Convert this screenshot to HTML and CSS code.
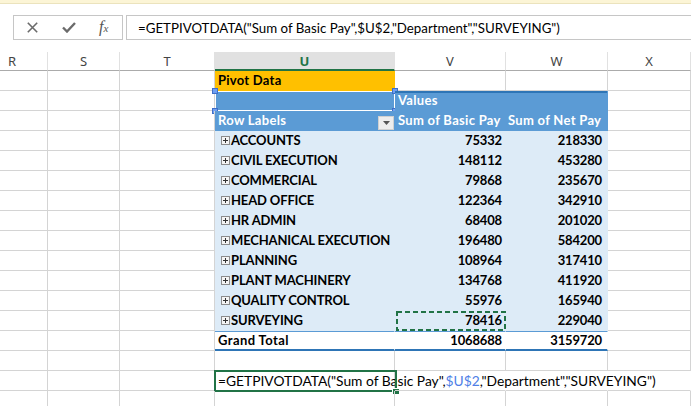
FILE: index.html
```html
<!DOCTYPE html>
<html>
<head>
<meta charset="utf-8">
<title>Pivot Data</title>
<link rel="stylesheet" href="styles.css">
</head>
<body>
<div class="topstrip"></div>
<div class="fbar">
  <div class="fctl">
    <svg class="ic-x" width="11" height="11" viewBox="0 0 11 11"><path d="M0.8 0.8L10.2 10.2M10.2 0.8L0.8 10.2" stroke="#6b6b6b" stroke-width="1.6" fill="none"/></svg>
    <svg class="ic-ok" width="14" height="11" viewBox="0 0 14 11"><path d="M1 5.5L5 9.5L13 1" stroke="#6b6b6b" stroke-width="2.4" fill="none"/></svg>
    <span class="fx">f<span class="fxs">x</span></span>
  </div>
  <div class="finput">=GETPIVOTDATA("Sum of Basic Pay",$U$2,"Department","SURVEYING")</div>
</div>

<div class="sheet">
  <div class="row hdr">
    <div class="h">R</div><div class="h">S</div><div class="h">T</div><div class="h sel">U</div><div class="h">V</div><div class="h">W</div><div class="h">X</div>
  </div>

  <div class="row">
    <div class="c"></div><div class="c"></div><div class="c"></div>
    <div class="c orange">Pivot Data</div>
    <div class="c"></div><div class="c"></div><div class="c"></div>
  </div>

  <div class="row">
    <div class="c"></div><div class="c"></div><div class="c"></div>
    <div class="c ph">
      <div class="selbox">
        <span class="hd tl"></span><span class="hd tr"></span><span class="hd bl"></span><span class="hd br"></span>
      </div>
    </div>
    <div class="c ph vals">Values</div>
    <div class="c"></div>
  </div>

  <div class="row">
    <div class="c"></div><div class="c"></div><div class="c"></div>
    <div class="c ph">Row Labels
      <span class="filt"><svg width="7" height="4" viewBox="0 0 7 4"><path d="M0 0H7L3.5 4Z" fill="#555"/></svg></span>
    </div>
    <div class="c ph">Sum of Basic Pay</div>
    <div class="c ph w">Sum of Net Pay</div>
    <div class="c"></div>
  </div>

  <div class="row">
    <div class="c"></div><div class="c"></div><div class="c"></div>
    <div class="c pv lbl"><svg class="pl" width="9" height="9" viewBox="0 0 9 9"><rect x="0.5" y="0.5" width="8" height="8" fill="#f4f4f4" stroke="#8c8c8c"/><path d="M2 4.5H7M4.5 2V7" stroke="#333"/></svg>ACCOUNTS</div>
    <div class="c pv num">75332</div><div class="c pv num w">218330</div>
    <div class="c"></div>
  </div>
  <div class="row">
    <div class="c"></div><div class="c"></div><div class="c"></div>
    <div class="c pv lbl"><svg class="pl" width="9" height="9" viewBox="0 0 9 9"><rect x="0.5" y="0.5" width="8" height="8" fill="#f4f4f4" stroke="#8c8c8c"/><path d="M2 4.5H7M4.5 2V7" stroke="#333"/></svg>CIVIL EXECUTION</div>
    <div class="c pv num">148112</div><div class="c pv num w">453280</div>
    <div class="c"></div>
  </div>
  <div class="row">
    <div class="c"></div><div class="c"></div><div class="c"></div>
    <div class="c pv lbl"><svg class="pl" width="9" height="9" viewBox="0 0 9 9"><rect x="0.5" y="0.5" width="8" height="8" fill="#f4f4f4" stroke="#8c8c8c"/><path d="M2 4.5H7M4.5 2V7" stroke="#333"/></svg>COMMERCIAL</div>
    <div class="c pv num">79868</div><div class="c pv num w">235670</div>
    <div class="c"></div>
  </div>
  <div class="row">
    <div class="c"></div><div class="c"></div><div class="c"></div>
    <div class="c pv lbl"><svg class="pl" width="9" height="9" viewBox="0 0 9 9"><rect x="0.5" y="0.5" width="8" height="8" fill="#f4f4f4" stroke="#8c8c8c"/><path d="M2 4.5H7M4.5 2V7" stroke="#333"/></svg>HEAD OFFICE</div>
    <div class="c pv num">122364</div><div class="c pv num w">342910</div>
    <div class="c"></div>
  </div>
  <div class="row">
    <div class="c"></div><div class="c"></div><div class="c"></div>
    <div class="c pv lbl"><svg class="pl" width="9" height="9" viewBox="0 0 9 9"><rect x="0.5" y="0.5" width="8" height="8" fill="#f4f4f4" stroke="#8c8c8c"/><path d="M2 4.5H7M4.5 2V7" stroke="#333"/></svg>HR ADMIN</div>
    <div class="c pv num">68408</div><div class="c pv num w">201020</div>
    <div class="c"></div>
  </div>
  <div class="row">
    <div class="c"></div><div class="c"></div><div class="c"></div>
    <div class="c pv lbl"><svg class="pl" width="9" height="9" viewBox="0 0 9 9"><rect x="0.5" y="0.5" width="8" height="8" fill="#f4f4f4" stroke="#8c8c8c"/><path d="M2 4.5H7M4.5 2V7" stroke="#333"/></svg>MECHANICAL EXECUTION</div>
    <div class="c pv num">196480</div><div class="c pv num w">584200</div>
    <div class="c"></div>
  </div>
  <div class="row">
    <div class="c"></div><div class="c"></div><div class="c"></div>
    <div class="c pv lbl"><svg class="pl" width="9" height="9" viewBox="0 0 9 9"><rect x="0.5" y="0.5" width="8" height="8" fill="#f4f4f4" stroke="#8c8c8c"/><path d="M2 4.5H7M4.5 2V7" stroke="#333"/></svg>PLANNING</div>
    <div class="c pv num">108964</div><div class="c pv num w">317410</div>
    <div class="c"></div>
  </div>
  <div class="row">
    <div class="c"></div><div class="c"></div><div class="c"></div>
    <div class="c pv lbl"><svg class="pl" width="9" height="9" viewBox="0 0 9 9"><rect x="0.5" y="0.5" width="8" height="8" fill="#f4f4f4" stroke="#8c8c8c"/><path d="M2 4.5H7M4.5 2V7" stroke="#333"/></svg>PLANT MACHINERY</div>
    <div class="c pv num">134768</div><div class="c pv num w">411920</div>
    <div class="c"></div>
  </div>
  <div class="row">
    <div class="c"></div><div class="c"></div><div class="c"></div>
    <div class="c pv lbl"><svg class="pl" width="9" height="9" viewBox="0 0 9 9"><rect x="0.5" y="0.5" width="8" height="8" fill="#f4f4f4" stroke="#8c8c8c"/><path d="M2 4.5H7M4.5 2V7" stroke="#333"/></svg>QUALITY CONTROL</div>
    <div class="c pv num">55976</div><div class="c pv num w">165940</div>
    <div class="c"></div>
  </div>
  <div class="row">
    <div class="c"></div><div class="c"></div><div class="c"></div>
    <div class="c pv lbl"><svg class="pl" width="9" height="9" viewBox="0 0 9 9"><rect x="0.5" y="0.5" width="8" height="8" fill="#f4f4f4" stroke="#8c8c8c"/><path d="M2 4.5H7M4.5 2V7" stroke="#333"/></svg>SURVEYING</div>
    <div class="c pv num">78416<svg class="marq" width="110" height="20" viewBox="0 0 110 20"><rect x="1" y="1" width="108" height="18" fill="none" stroke="#217346" stroke-width="2" stroke-dasharray="5 3"/></svg></div>
    <div class="c pv num w">229040</div>
    <div class="c"></div>
  </div>

  <div class="row">
    <div class="c"></div><div class="c"></div><div class="c"></div>
    <div class="c gt gtl">Grand Total</div>
    <div class="c gt num">1068688</div><div class="c gt num w">3159720</div>
    <div class="c"></div>
  </div>

  <div class="row">
    <div class="c"></div><div class="c"></div><div class="c"></div><div class="c"></div><div class="c"></div><div class="c"></div><div class="c"></div>
  </div>

  <div class="row">
    <div class="c"></div><div class="c"></div><div class="c"></div>
    <div class="c active">=GETPIVOTDATA("Sum of Basic Pay",<span class="ref">$U$2</span>,"Department","SURVEYING")</div>
    <div class="c ov"></div><div class="c ov"></div><div class="c ov"></div>
  </div>

  <div class="row">
    <div class="c"></div><div class="c"></div><div class="c"></div><div class="c"></div><div class="c"></div><div class="c"></div><div class="c"></div>
  </div>
</div>
</body>
</html>
```

FILE: styles.css
```css
html, body {
  margin: 0;
  padding: 0;
  background: #fff;
}
body {
  width: 691px;
  height: 406px;
  overflow: hidden;
  font-family: Lato, "Liberation Sans", sans-serif;
  color: #000;
}

.topstrip {
  height: 3px;
  background: #fcf5d6;
  border-bottom: 1px solid #ebe3bd;
}

.fbar {
  display: flex;
  gap: 3px;
  padding: 11px 0 0 13px;
  height: 25px;
  margin-bottom: 11px;
}
.fctl {
  box-sizing: border-box;
  width: 110px;
  height: 25px;
  border: 1px solid #c6c6c6;
  display: flex;
  align-items: center;
  gap: 24px;
  padding-left: 13px;
}
.fx {
  font-family: "Liberation Serif", serif;
  font-style: italic;
  font-size: 16px;
  color: #555;
  margin-left: -1px;
  line-height: 16px;
}
.fxs {
  font-size: 11px;
}
.finput {
  box-sizing: border-box;
  flex: 1;
  height: 25px;
  border: 1px solid #c6c6c6;
  border-right: none;
  padding-left: 11px;
  display: flex;
  align-items: center;
  font-size: 13.3px;
  white-space: nowrap;
  color: #000;
}

.sheet {
  padding-top: 1px;
}

.row {
  display: grid;
  grid-template-columns: 48px 72px 95px 180px 111px 102px 83px;
  height: 20px;
}

.hdr {
  height: 19px;
}
.h {
  box-sizing: border-box;
  height: 19px;
  border-right: 1px solid #e1e1e1;
  border-bottom: 1px solid #ababab;
  display: flex;
  align-items: center;
  justify-content: center;
  font-family: "Noto Sans", "Open Sans", sans-serif;
  font-size: 13px;
  color: #444;
}
.h:first-child {
  justify-content: flex-start;
  padding-left: 8px;
}
.h.sel {
  background: #e1e1e1;
  border-bottom: 2px solid #217346;
  color: #217346;
  font-weight: 700;
}

.c {
  box-sizing: border-box;
  position: relative;
  height: 20px;
  border-right: 1px solid #d4d4d4;
  border-bottom: 1px solid #d4d4d4;
  display: flex;
  align-items: flex-end;
  padding: 0 3px 1px 3px;
  font-size: 13.8px;
  line-height: 17px;
  white-space: nowrap;
}

.orange,
.ph,
.pv,
.gt {
  font-size: 13px;
  letter-spacing: -0.15px;
}

.orange {
  background: #ffc000;
  border-color: #ffc000;
  font-weight: 700;
  letter-spacing: 0.25px;
}

.ph {
  background: #5b9bd5;
  border-color: #5b9bd5;
  color: #fff;
  font-weight: 700;
  letter-spacing: 0.3px;
}
.vals {
  grid-column: span 2;
  box-shadow: inset 0 2px 0 #2e75b6;
}
.ph.w {
  padding-left: 2px;
}

.selbox {
  position: absolute;
  left: 0;
  top: 0;
  width: 180px;
  height: 20px;
  box-sizing: border-box;
  border: 1px solid #fff;
}
.hd {
  position: absolute;
  width: 6px;
  height: 6px;
  box-sizing: border-box;
  background: #6f9ff0;
  border: 1px solid #3f6fc8;
}
.hd.tl { left: -4px; top: -4px; }
.hd.tr { right: -4px; top: -4px; }
.hd.bl { left: -4px; bottom: -4px; }
.hd.br { right: -4px; bottom: -4px; }

.filt {
  position: absolute;
  right: 0;
  top: 5px;
  width: 16px;
  height: 14px;
  box-sizing: border-box;
  background: #ededed;
  border: 1px solid #d0d0d0;
  display: flex;
  align-items: center;
  justify-content: center;
}

.pv {
  background: #ddebf7;
  border-color: #ddebf7;
  font-weight: 700;
}
.num {
  justify-content: flex-end;
}
.num.w {
  padding-right: 5px;
}
.pl {
  flex: none;
  margin: 0 1px 4px 3px;
}
.marq {
  position: absolute;
  left: 1px;
  top: 0;
}

.gt {
  background: #fff;
  font-weight: 700;
  border-top: 1px solid #5b9bd5;
  border-bottom: 2px solid #2e75b6;
  border-right-color: #fff;
  padding-bottom: 0;
}
.gtl {
  letter-spacing: 0.4px;
}

.active {
  overflow: visible;
}
.active::before {
  content: "";
  position: absolute;
  left: -1px;
  top: -1px;
  width: 183px;
  height: 22px;
  box-sizing: border-box;
  border: 2px solid #217346;
}
.active::after {
  content: "";
  position: absolute;
  left: 177px;
  top: 17px;
  width: 7px;
  height: 6px;
  box-sizing: border-box;
  background: #217346;
  border-left: 1px solid #fff;
  border-top: 1px solid #fff;
}
.ref {
  color: #4f7fe6;
}
.ov {
  border-right-color: transparent;
}
```
